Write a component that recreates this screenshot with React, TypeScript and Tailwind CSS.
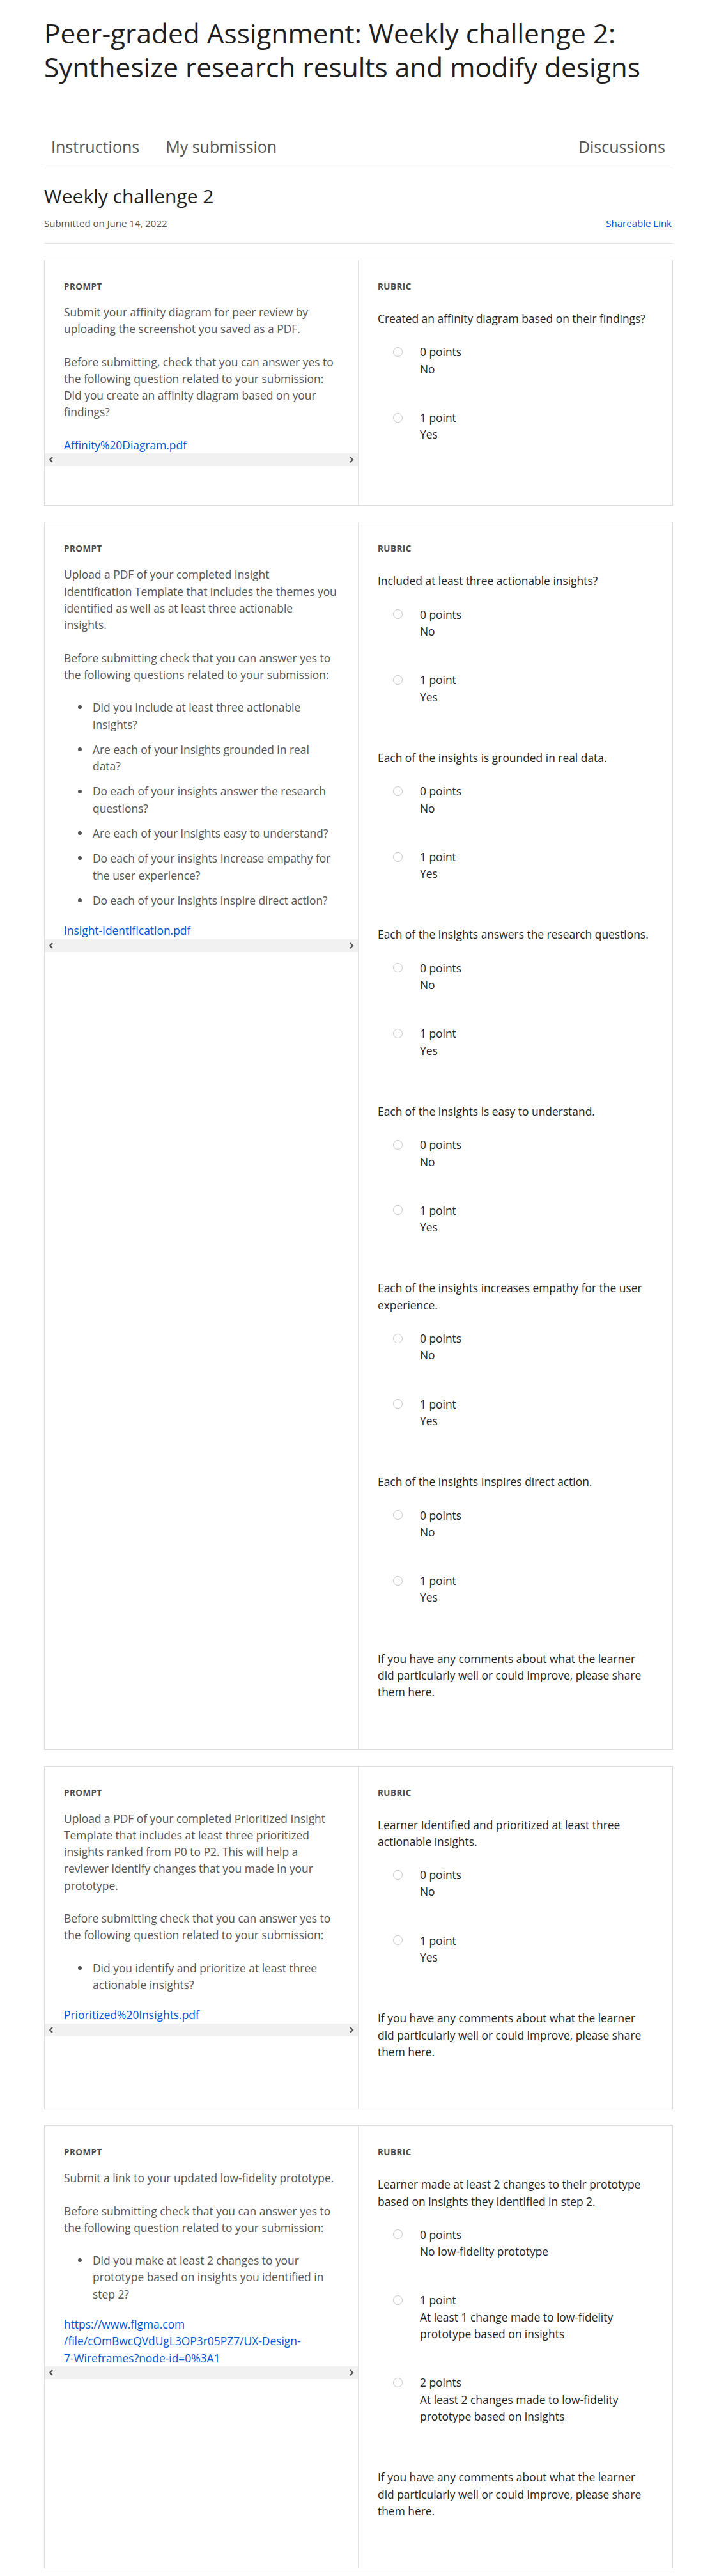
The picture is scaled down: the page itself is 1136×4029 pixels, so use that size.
import React from 'react';

type Option = { points: string; desc: string[] };
type Criterion = { question: string[]; options: Option[] };
type CardData = {
  paras: string[][];
  bullets?: string[][];
  link: string[];
  criteria: Criterion[];
  comment: boolean;
};

const noYes: Option[] = [
  { points: '0 points', desc: ['No'] },
  { points: '1 point', desc: ['Yes'] },
];

const beforeCheck = [
  'Before submitting check that you can answer yes to',
  'the following question related to your submission:',
];

const cards: CardData[] = [
  {
    paras: [
      ['Submit your affinity diagram for peer review by', 'uploading the screenshot you saved as a PDF.'],
      [
        'Before submitting, check that you can answer yes to',
        'the following question related to your submission:',
        'Did you create an affinity diagram based on your',
        'findings?',
      ],
    ],
    link: ['Affinity%20Diagram.pdf'],
    criteria: [{ question: ['Created an affinity diagram based on their findings?'], options: noYes }],
    comment: false,
  },
  {
    paras: [
      [
        'Upload a PDF of your completed Insight',
        'Identification Template that includes the themes you',
        'identified as well as at least three actionable',
        'insights.',
      ],
      ['Before submitting check that you can answer yes to', 'the following questions related to your submission:'],
    ],
    bullets: [
      ['Did you include at least three actionable', 'insights?'],
      ['Are each of your insights grounded in real', 'data?'],
      ['Do each of your insights answer the research', 'questions?'],
      ['Are each of your insights easy to understand?'],
      ['Do each of your insights Increase empathy for', 'the user experience?'],
      ['Do each of your insights inspire direct action?'],
    ],
    link: ['Insight-Identification.pdf'],
    criteria: [
      { question: ['Included at least three actionable insights?'], options: noYes },
      { question: ['Each of the insights is grounded in real data.'], options: noYes },
      { question: ['Each of the insights answers the research questions.'], options: noYes },
      { question: ['Each of the insights is easy to understand.'], options: noYes },
      { question: ['Each of the insights increases empathy for the user', 'experience.'], options: noYes },
      { question: ['Each of the insights Inspires direct action.'], options: noYes },
    ],
    comment: true,
  },
  {
    paras: [
      [
        'Upload a PDF of your completed Prioritized Insight',
        'Template that includes at least three prioritized',
        'insights ranked from P0 to P2. This will help a',
        'reviewer identify changes that you made in your',
        'prototype.',
      ],
      beforeCheck,
    ],
    bullets: [['Did you identify and prioritize at least three', 'actionable insights?']],
    link: ['Prioritized%20Insights.pdf'],
    criteria: [
      { question: ['Learner Identified and prioritized at least three', 'actionable insights.'], options: noYes },
    ],
    comment: true,
  },
  {
    paras: [['Submit a link to your updated low-fidelity prototype.'], beforeCheck],
    bullets: [['Did you make at least 2 changes to your', 'prototype based on insights you identified in', 'step 2?']],
    link: ['https://www.figma.com', '/file/cOmBwcQVdUgL3OP3r05PZ7/UX-Design-', '7-Wireframes?node-id=0%3A1'],
    criteria: [
      {
        question: ['Learner made at least 2 changes to their prototype', 'based on insights they identified in step 2.'],
        options: [
          { points: '0 points', desc: ['No low-fidelity prototype'] },
          { points: '1 point', desc: ['At least 1 change made to low-fidelity', 'prototype based on insights'] },
          { points: '2 points', desc: ['At least 2 changes made to low-fidelity', 'prototype based on insights'] },
        ],
      },
    ],
    comment: true,
  },
];

const Lines = ({ lines }: { lines: string[] }) => (
  <>
    {lines.map((l, i) => (
      <React.Fragment key={i}>
        {i > 0 && <br />}
        {l}
      </React.Fragment>
    ))}
  </>
);

const Label = ({ children }: { children: React.ReactNode }) => (
  <div className="text-[13.4px] font-bold leading-[18px] tracking-[0.5px] text-[#4a4a4a]">{children}</div>
);

const Scrollbar = () => (
  <div className="flex h-[20px] items-center justify-between bg-[#f1f1f1] px-[6px]">
    <svg width="8" height="10" viewBox="0 0 8 10">
      <path d="M6 1 L2 5 L6 9" fill="none" stroke="#505050" strokeWidth="2" />
    </svg>
    <svg width="8" height="10" viewBox="0 0 8 10">
      <path d="M2 1 L6 5 L2 9" fill="none" stroke="#505050" strokeWidth="2" />
    </svg>
  </div>
);

const Radio = () => (
  <span className="block h-[15px] w-[15px] rounded-full border-[1.5px] border-[#c6c6c6] bg-white" />
);

const PromptColumn = ({ card }: { card: CardData }) => (
  <div className="border-r border-[#e3e3e3] pt-[32px]">
    <div className="px-[30px]">
      <Label>PROMPT</Label>
      <div className="mt-[18px] flex flex-col whitespace-nowrap text-[17.4px] leading-[26.3px] text-[#555555]">
        {card.paras.map((p, i) => (
          <p key={i} className="mb-[25px]">
            <Lines lines={p} />
          </p>
        ))}
        {card.bullets && (
          <ul className="mb-[21px] flex flex-col gap-[13px]">
            {card.bullets.map((b, i) => (
              <li key={i} className="flex pl-[22px]">
                <span className="flex h-[26.3px] w-[23px] shrink-0 items-center">
                  <span className="block h-[6px] w-[6px] rounded-full bg-[#555555]" />
                </span>
                <span>
                  <Lines lines={b} />
                </span>
              </li>
            ))}
          </ul>
        )}
        <a className="block text-[#0056d2]">
          <Lines lines={card.link} />
        </a>
      </div>
    </div>
    <Scrollbar />
  </div>
);

const RubricColumn = ({ card }: { card: CardData }) => (
  <div className="flex flex-col px-[30px] pt-[32px] pb-[29px]">
    <Label>RUBRIC</Label>
    <div className="mt-[28px] flex flex-col whitespace-nowrap text-[17.4px] leading-[26.3px] text-[#1f1f1f]">
      {card.criteria.map((c, i) => (
        <div key={i} className="mb-[19px] flex flex-col">
          <div>
            <Lines lines={c.question} />
          </div>
          <div className="mt-[26px] flex flex-col">
            {c.options.map((o, j) => (
              <div key={j} className="mb-[50px] flex pl-[24px]">
                <div className="flex h-[26.3px] w-[42px] shrink-0 items-center">
                  <Radio />
                </div>
                <div>
                  <div>{o.points}</div>
                  <div>
                    <Lines lines={o.desc} />
                  </div>
                </div>
              </div>
            ))}
          </div>
        </div>
      ))}
      {card.comment && (
        <div className="mb-[47px]">
          <Lines
            lines={[
              'If you have any comments about what the learner',
              'did particularly well or could improve, please share',
              'them here.',
            ]}
          />
        </div>
      )}
    </div>
  </div>
);

export default function App() {
  return (
    <div className="min-h-screen bg-white font-['Open_Sans',sans-serif]">
      <div className="w-[1053px] pb-[9px] pl-[69px] pt-[25px]">
        <h1 className="text-[42.4px] font-normal leading-[53px] text-[#1f1f1f]">
          Peer-graded Assignment: Weekly challenge 2:
          <br />
          Synthesize research results and modify designs
        </h1>

        <div className="mt-[80px] flex items-center justify-between border-b border-[#e6e6e6] pb-[15px] pl-[11px] pr-[12px] text-[25px] leading-[36px] text-[#555555]">
          <div className="flex gap-[41px]">
            <span>Instructions</span>
            <span>My submission</span>
          </div>
          <span>Discussions</span>
        </div>

        <h2 className="mt-[24px] text-[30px] font-normal leading-[40px] text-[#1f1f1f]">Weekly challenge 2</h2>
        <div className="mt-[11px] flex items-center justify-between border-b border-[#e1e1e1] pb-[20px] pr-[2px] text-[15px] leading-[22px]">
          <span className="text-[#555555]">Submitted on June 14, 2022</span>
          <a className="text-[#0056d2]">Shareable Link</a>
        </div>

        <div className="mt-[25px] flex flex-col gap-[25px]">
          {cards.map((card, i) => (
            <div key={i} className="grid grid-cols-2 border border-[#dcdcdc]">
              <PromptColumn card={card} />
              <RubricColumn card={card} />
            </div>
          ))}
        </div>
      </div>
    </div>
  );
}
